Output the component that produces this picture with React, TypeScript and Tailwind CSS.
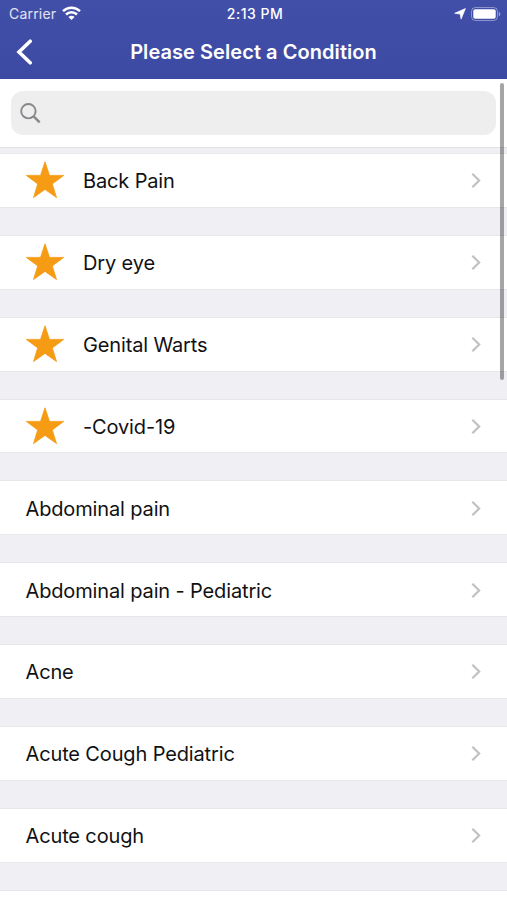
type Condition = {
  name: string;
  starred?: boolean;
};

const conditions: Condition[] = [
  { name: "Back Pain", starred: true },
  { name: "Dry eye", starred: true },
  { name: "Genital Warts", starred: true },
  { name: "-Covid-19", starred: true },
  { name: "Abdominal pain" },
  { name: "Abdominal pain - Pediatric" },
  { name: "Acne" },
  { name: "Acute Cough Pediatric" },
  { name: "Acute cough" },
];

function WifiIcon() {
  return (
    <svg
      className="-translate-y-px"
      width="19"
      height="14"
      viewBox="0 0 19 14"
      fill="none"
      stroke="white"
      strokeWidth="2.5"
    >
      <path d="M1 5.1a12.2 12.2 0 0 1 17 0" />
      <path d="M4 8.5a7.9 7.9 0 0 1 11 0" />
      <path d="M6.4 11a4.4 4.4 0 0 1 6.2 0L9.5 14z" fill="white" stroke="none" />
    </svg>
  );
}

function LocationIcon() {
  return (
    <svg width="12" height="12" viewBox="0 0 12 12" fill="white" stroke="white" strokeWidth=".7" strokeLinejoin="round">
      <path d="M11.4.6L7.1 11.1 6.2 6 .7 5.3z" />
    </svg>
  );
}

function BatteryIcon() {
  return (
    <svg width="30" height="14" viewBox="0 0 30 14" fill="none">
      <rect x=".5" y=".5" width="26" height="13" rx="4" stroke="white" strokeOpacity=".4" />
      <rect x="2.3" y="2.3" width="22.4" height="9.4" rx="2" fill="white" />
      <path d="M27.8 4.7c2.1.8 2.1 3.8 0 4.6z" fill="white" fillOpacity=".45" />
    </svg>
  );
}

function StarIcon() {
  return (
    <svg
      className="shrink-0"
      width="40"
      height="38"
      viewBox="0 0 40 38"
      fill="#f59b14"
      stroke="#f59b14"
      strokeWidth=".8"
      strokeLinejoin="round"
    >
      <path d="M20 .8l4.5 13.6h14.2L27.3 22.9l4.2 13.7L20 28.4 8.5 36.6l4.2-13.7L1.3 14.4h14.2z" />
    </svg>
  );
}

function ChevronRight() {
  return (
    <svg
      className="ml-auto shrink-0 translate-y-[0.5px]"
      width="10"
      height="16"
      viewBox="0 0 10 16"
      fill="none"
      stroke="#c1c1c4"
      strokeWidth="2.2"
    >
      <path d="M1.3 1.2L8.2 8l-6.9 6.8" />
    </svg>
  );
}

function Header() {
  return (
    <header className="h-[79px] bg-linear-to-b from-[#424fa8] to-[#3d4aa3] text-white">
      <div className="grid h-[27px] grid-cols-3 items-center pr-[6px] pl-[9px] text-[14px]">
        <div className="flex items-center gap-[6px] text-white/85">
          <span className="tracking-[0.2px]">Carrier</span>
          <WifiIcon />
        </div>
        <span className="text-center font-medium tracking-[0.5px]">2:13 PM</span>
        <div className="flex items-center justify-end gap-[5px]">
          <LocationIcon />
          <BatteryIcon />
        </div>
      </div>
      <div className="grid h-[50px] grid-cols-[40px_1fr_40px] items-center">
        <button className="pl-4" aria-label="Back">
          <svg
            width="18"
            height="26"
            viewBox="0 0 18 26"
            fill="none"
            stroke="white"
            strokeWidth="3.6"
            strokeLinecap="round"
          >
            <path d="M14.2 2.2L3 13l11.2 10.8" />
          </svg>
        </button>
        <h1 className="text-center text-[20px] font-semibold tracking-[0.06px] whitespace-nowrap">
          Please Select a Condition
        </h1>
      </div>
    </header>
  );
}

function SearchBar() {
  return (
    <div className="h-[68px] px-[11px] pt-[12px]">
      <div className="flex h-[44px] items-center rounded-[12px] bg-[#eeeeef] pl-[9px]">
        <svg width="21" height="21" viewBox="0 0 21 21" fill="none" stroke="#88888c" strokeWidth="1.9">
          <circle cx="8.4" cy="8.2" r="7.2" />
          <path d="M13.4 13.2l6.2 6.1" strokeWidth="2.5" />
        </svg>
      </div>
    </div>
  );
}

function ConditionRow({ condition }: { condition: Condition }) {
  return (
    <li className="flex h-[54.85px] items-center border-y border-[#e7e7ea] bg-white pr-[26px] pl-[25px]">
      {condition.starred && (
        <span className="mr-[17.5px]">
          <StarIcon />
        </span>
      )}
      <span className="pt-[2px] pl-[0.5px] text-[20px] tracking-[-0.14px] whitespace-nowrap text-[#111113]">
        {condition.name}
      </span>
      <ChevronRight />
    </li>
  );
}

export default function App() {
  return (
    <div className="relative h-[900px] w-[507px] overflow-hidden bg-white font-[Inter,sans-serif]">
      <Header />
      <SearchBar />
      <main className="h-[753px] border-t border-[#e2e2e5] bg-[#f0f0f4] pt-[5px]">
        <ul className="flex flex-col gap-[27px]">
          {conditions.map((condition) => (
            <ConditionRow key={condition.name} condition={condition} />
          ))}
          <li className="h-[54px] border-t border-[#e7e7ea] bg-white" />
        </ul>
      </main>
      <div className="absolute top-[83px] right-[3px] h-[297px] w-[4px] rounded-full bg-black/35" />
    </div>
  );
}
